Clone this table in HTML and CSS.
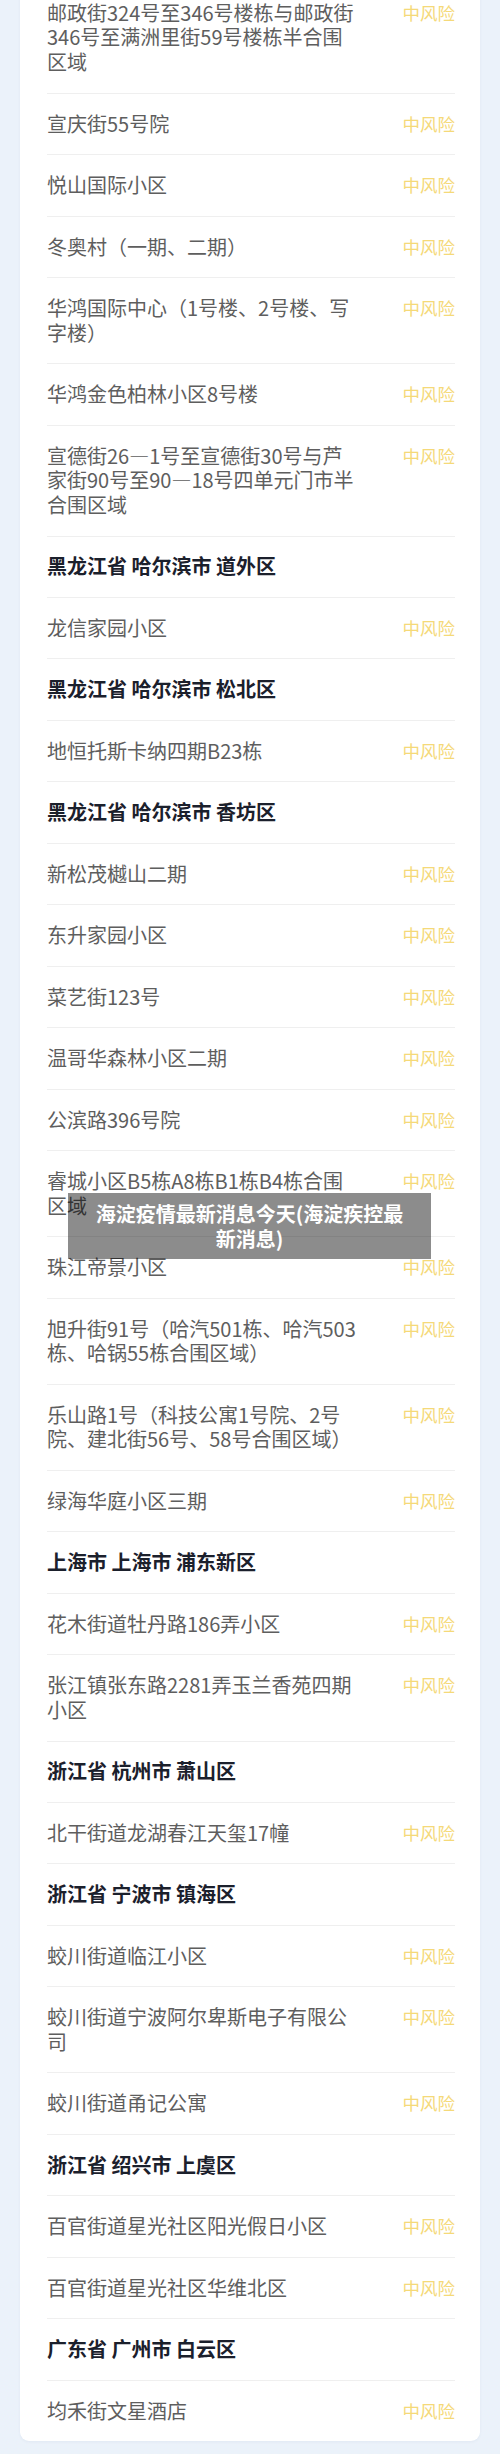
FILE: index.html
```html
<!DOCTYPE html>
<html lang="zh-CN">
<head>
  <meta charset="UTF-8" />
  <meta name="viewport" content="width=device-width, initial-scale=1.0"/>
  <title>中风险地区</title>
  <link rel="stylesheet" href="styles.css">
</head>
<body>
  <div class="page">
    <div class="card">
      <div class="row"><span class="name">邮政街324号至346号楼栋与邮政街346号至满洲里街59号楼栋半合围区域</span><span class="risk">中风险</span></div>
      <div class="row"><span class="name">宣庆街55号院</span><span class="risk">中风险</span></div>
      <div class="row"><span class="name">悦山国际小区</span><span class="risk">中风险</span></div>
      <div class="row"><span class="name">冬奥村（一期、二期）</span><span class="risk">中风险</span></div>
      <div class="row"><span class="name">华鸿国际中心（1号楼、2号楼、写字楼）</span><span class="risk">中风险</span></div>
      <div class="row"><span class="name">华鸿金色柏林小区8号楼</span><span class="risk">中风险</span></div>
      <div class="row"><span class="name">宣德街26—1号至宣德街30号与芦家街90号至90—18号四单元门市半合围区域</span><span class="risk">中风险</span></div>

      <div class="row area">黑龙江省 哈尔滨市 道外区</div>
      <div class="row"><span class="name">龙信家园小区</span><span class="risk">中风险</span></div>

      <div class="row area">黑龙江省 哈尔滨市 松北区</div>
      <div class="row"><span class="name">地恒托斯卡纳四期B23栋</span><span class="risk">中风险</span></div>

      <div class="row area">黑龙江省 哈尔滨市 香坊区</div>
      <div class="row"><span class="name">新松茂樾山二期</span><span class="risk">中风险</span></div>
      <div class="row"><span class="name">东升家园小区</span><span class="risk">中风险</span></div>
      <div class="row"><span class="name">菜艺街123号</span><span class="risk">中风险</span></div>
      <div class="row"><span class="name">温哥华森林小区二期</span><span class="risk">中风险</span></div>
      <div class="row"><span class="name">公滨路396号院</span><span class="risk">中风险</span></div>
      <div class="row"><span class="name">睿城小区B5栋A8栋B1栋B4栋合围区域</span><span class="risk">中风险</span></div>
      <div class="row"><span class="name">珠江帝景小区</span><span class="risk">中风险</span></div>
      <div class="row"><span class="name">旭升街91号（哈汽501栋、哈汽503栋、哈锅55栋合围区域）</span><span class="risk">中风险</span></div>
      <div class="row"><span class="name">乐山路1号（科技公寓1号院、2号院、建北街56号、58号合围区域）</span><span class="risk">中风险</span></div>
      <div class="row"><span class="name">绿海华庭小区三期</span><span class="risk">中风险</span></div>

      <div class="row area">上海市 上海市 浦东新区</div>
      <div class="row"><span class="name">花木街道牡丹路186弄小区</span><span class="risk">中风险</span></div>
      <div class="row"><span class="name">张江镇张东路2281弄玉兰香苑四期小区</span><span class="risk">中风险</span></div>

      <div class="row area">浙江省 杭州市 萧山区</div>
      <div class="row"><span class="name">北干街道龙湖春江天玺17幢</span><span class="risk">中风险</span></div>

      <div class="row area">浙江省 宁波市 镇海区</div>
      <div class="row"><span class="name">蛟川街道临江小区</span><span class="risk">中风险</span></div>
      <div class="row"><span class="name">蛟川街道宁波阿尔卑斯电子有限公司</span><span class="risk">中风险</span></div>
      <div class="row"><span class="name">蛟川街道甬记公寓</span><span class="risk">中风险</span></div>

      <div class="row area">浙江省 绍兴市 上虞区</div>
      <div class="row"><span class="name">百官街道星光社区阳光假日小区</span><span class="risk">中风险</span></div>
      <div class="row"><span class="name">百官街道星光社区华维北区</span><span class="risk">中风险</span></div>

      <div class="row area">广东省 广州市 白云区</div>
      <div class="row"><span class="name">均禾街文星酒店</span><span class="risk">中风险</span></div>
    </div>

    <div class="caption">海淀疫情最新消息今天(海淀疾控最新消息)</div>
  </div>
</body>
</html>
```

FILE: styles.css
```css
body {
  margin: 0;
  background: #ebf2fa;
  font-family: "Noto Sans CJK SC", "Noto Sans", sans-serif;
}
.page {
  position: relative;
  height: 2454px;
  overflow: hidden;
  padding: 0 20px;
}
.card {
  margin-top: -17.15px;
  background: #fff;
  border-radius: 9px;
  box-shadow: 0 1px 3px rgba(60,90,130,0.06);
  padding: 0 25px 0 27px;
}
.row {
  display: flex;
  justify-content: space-between;
  align-items: flex-start;
  padding: 17.875px 0;
  border-bottom: 1px solid #efefef;
  font-size: 20px;
  line-height: 24.7px;
}
.row:last-child {
  border-bottom: none;
}
.name {
  max-width: 310px;
  color: #5e5e5e;
}
.risk {
  color: #f5d979;
  font-size: 17.5px;
}
.area {
  color: #1b202c;
  font-weight: 700;
}
.caption {
  position: absolute;
  top: 1193px;
  left: 68px;
  width: 363px;
  box-sizing: border-box;
  padding: 8px 22px;
  background: rgba(0,0,0,0.45);
  color: #fff;
  font-weight: 700;
  font-size: 20px;
  line-height: 25px;
  text-align: center;
}
```
